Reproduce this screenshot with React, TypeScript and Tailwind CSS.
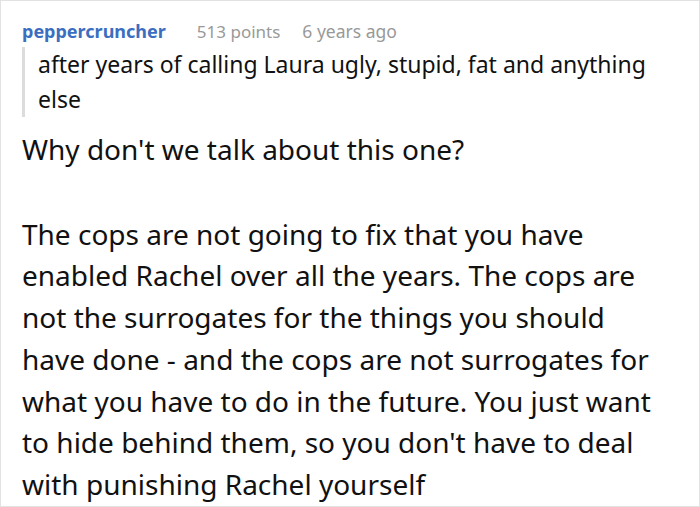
export default function App() {
  return (
    <div className="w-[700px] h-[507px] overflow-hidden bg-white border border-[#e2e2e2] pl-[21px] pr-[38px] font-['Noto_Sans',sans-serif]">
      <div className="flex items-baseline pt-[17px] leading-[26px]">
        <span className="text-[18px] font-bold text-[#3c6ebf]">peppercruncher</span>
        <span className="ml-[31px] text-[17px] text-[#999]">513 points</span>
        <span className="ml-[22px] text-[17.5px] text-[#999]">6 years ago</span>
      </div>
      <blockquote className="mt-[2px] border-l-[3px] border-[#dcdcdc] pl-[13px] text-[23px] leading-[35px] text-[#111]">
        after years of calling Laura ugly, stupid, fat and anything else
      </blockquote>
      <div className="mt-[12px] text-[28px] leading-[41.7px] text-[#111]">
        <p>Why don't we talk about this one?</p>
        <p className="mt-[43px]">
          The cops are not going to fix that you have enabled Rachel over all the years. The cops are not the surrogates for the things you should have done - and the cops are not surrogates for what you have to do in the future. You just want to hide behind them, so you don't have to deal with punishing Rachel yourself
        </p>
      </div>
    </div>
  );
}
